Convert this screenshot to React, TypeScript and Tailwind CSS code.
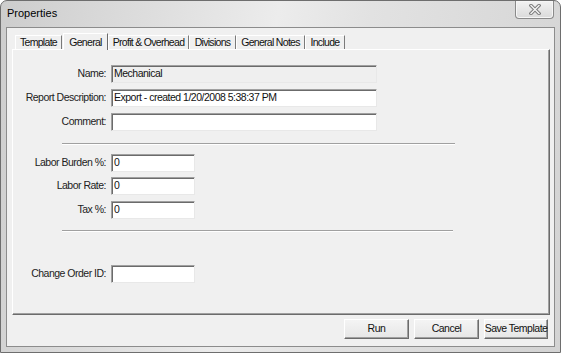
import React from "react";

const font = { fontFamily: '"Liberation Sans", Arial, sans-serif' };

const tabs = [
    { name: "Template", w: "w-[47px]" },
    { name: "General", w: "w-[45px]", active: true },
    { name: "Profit & Overhead", w: "w-[81px]" },
    { name: "Divisions", w: "w-[47px]" },
    { name: "General Notes", w: "w-[69px]" },
    { name: "Include", w: "w-[40px]" },
];

function Field({
    label,
    value,
    wide,
    disabled,
    className,
}: {
    label: string;
    value?: string;
    wide?: boolean;
    disabled?: boolean;
    className?: string;
}) {
    return (
        <div className={"flex items-center h-[18px] " + (className || "")}>
            <div className="w-[93px] text-right text-[#222] tracking-[-0.5px] whitespace-nowrap">
                {label}
            </div>
            <div
                className={
                    "ml-[5px] h-[18px] flex items-center pl-[2px] border border-t-[#a0a0a0] border-l-[#a0a0a0] border-r-[#e8e8e8] border-b-[#e8e8e8] shadow-[inset_1px_1px_0_#6b6b6b] text-[#111] tracking-[-0.5px] whitespace-nowrap overflow-hidden " +
                    (wide ? "w-[266px] " : "w-[84px] ") +
                    (disabled ? "bg-[#efefef]" : "bg-white")
                }
            >
                {value}
            </div>
        </div>
    );
}

function Separator({ className, w }: { className?: string; w: string }) {
    return (
        <div
            className={
                "ml-[49px] h-[2px] border-t border-t-[#a0a0a0] border-b border-b-white " +
                w +
                " " +
                (className || "")
            }
        />
    );
}

function Btn({ label, w }: { label: string; w: string }) {
    return (
        <button
            className={
                "h-[20px] flex items-center justify-center border border-t-white border-l-white border-r-[#6b6b6b] border-b-[#6b6b6b] shadow-[inset_-1px_-1px_0_#a0a0a0] bg-[linear-gradient(#f4f4f4,#e6e6e6)] text-[#111] tracking-[-0.5px] whitespace-nowrap " +
                w
            }
        >
            {label}
        </button>
    );
}

export default function App() {
    return (
        <div
            className="w-[561px] h-[353px] flex flex-col relative border border-[#6e6e6e] rounded-t-[7px] px-[5px] pb-[5px] bg-[linear-gradient(100deg,#cdcdcd_0%,#dedede_25%,#ececec_45%,#e2e2e2_60%,#d3d3d3_100%)] text-[10.5px] overflow-hidden"
            style={font}
        >
            {/* title bar */}
            <div className="h-[26px] flex items-center pl-[1px] pb-[1px] text-[11px] text-black">
                Properties
            </div>
            <div className="absolute top-0 right-[6px] w-[39px] h-[18px] border border-t-0 border-[#8a8a8a] rounded-b-[4px] bg-[linear-gradient(#f3f3f3,#dadada)] shadow-[inset_0_0_0_1px_#f6f6f6] flex items-center justify-center">
                <svg width="12" height="11" viewBox="0 0 12 11">
                    <path d="M2 1.5 L10 9.5 M10 1.5 L2 9.5" stroke="#7d7d7d" strokeWidth="3.4" strokeLinecap="square" />
                    <path d="M2 1.5 L10 9.5 M10 1.5 L2 9.5" stroke="#f7f7f7" strokeWidth="1.3" strokeLinecap="square" />
                </svg>
            </div>

            {/* client area */}
            <div className="flex-1 flex flex-col border border-[#8c8c8c] bg-[#f0f0f0]">
                {/* tabs */}
                <div className="mt-[5px] ml-[8px] h-[16px] flex items-end relative z-10">
                    {tabs.map((t) =>
                        t.active ? (
                            <div
                                key={t.name}
                                className={
                                    "h-[17px] mb-[-1px] ml-[1px] flex items-start pt-[1px] justify-center bg-[#f0f0f0] border-l border-t border-l-white border-t-white border-r border-r-[#6b6b6b] text-[#111] tracking-[-0.7px] whitespace-nowrap " +
                                    t.w
                                }
                            >
                                {t.name}
                            </div>
                        ) : (
                            <div
                                key={t.name}
                                className={
                                    "h-[14px] flex items-center justify-center border-l border-t border-l-white border-t-white border-r border-r-[#7a7a7a] text-[#111] tracking-[-0.7px] whitespace-nowrap " +
                                    t.w
                                }
                            >
                                {t.name}
                            </div>
                        )
                    )}
                </div>

                {/* panel */}
                <div className="ml-[5px] w-[538px] h-[266px] border border-t-white border-l-white border-r-[#6b6b6b] border-b-[#6b6b6b] shadow-[inset_-1px_-1px_0_#a0a0a0] flex flex-col">
                    <Field className="mt-[15px]" label="Name:" value="Mechanical" wide disabled />
                    <Field className="mt-[6px]" label="Report Description:" value="Export - created 1/20/2008 5:38:37 PM" wide />
                    <Field className="mt-[6px]" label="Comment:" wide />
                    <Separator className="mt-[12px]" w="w-[393px]" />
                    <Field className="mt-[9px]" label="Labor Burden %:" value="0" />
                    <Field className="mt-[5px]" label="Labor Rate:" value="0" />
                    <Field className="mt-[6px]" label="Tax %:" value="0" />
                    <Separator className="mt-[11px]" w="w-[391px]" />
                    <Field className="mt-[33px]" label="Change Order ID:" />
                </div>

                {/* buttons */}
                <div className="mt-[4px] flex justify-end gap-[5px] pr-[6px]">
                    <Btn label="Run" w="w-[65px]" />
                    <Btn label="Cancel" w="w-[65px]" />
                    <Btn label="Save Template" w="w-[64px]" />
                </div>
            </div>
        </div>
    );
}
